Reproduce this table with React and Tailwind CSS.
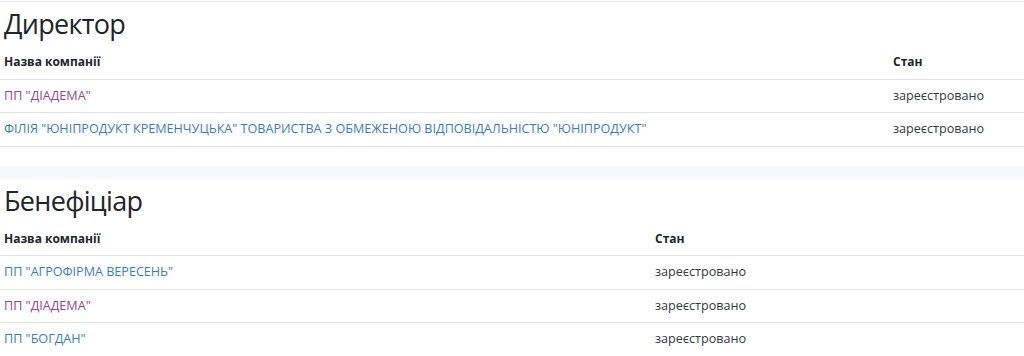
import React from "react";

const font = { fontFamily: '"Open Sans", "Noto Sans", Arial, sans-serif' };

const directors = [
  { name: 'ПП "ДІАДЕМА"', status: "зареєстровано", visited: true },
  {
    name: 'ФІЛІЯ "ЮНІПРОДУКТ КРЕМЕНЧУЦЬКА" ТОВАРИСТВА З ОБМЕЖЕНОЮ ВІДПОВІДАЛЬНІСТЮ "ЮНІПРОДУКТ"',
    status: "зареєстровано",
    visited: false,
  },
];

const beneficiaries = [
  { name: 'ПП "АГРОФІРМА ВЕРЕСЕНЬ"', status: "зареєстровано", visited: false },
  { name: 'ПП "ДІАДЕМА"', status: "зареєстровано", visited: true },
  { name: 'ПП "БОГДАН"', status: "зареєстровано", visited: false },
];

function CompanyTable({ title, rows, firstColClass }) {
  return (
    <section>
      <h2 className="px-[4px] pt-[3px] pb-[4px] text-[27px] leading-[37px] tracking-[-0.7px] font-medium text-[#212529]">
        {title}
      </h2>
      <table className="w-full border-collapse text-[#212529]">
        <thead>
          <tr className="border-b border-[#dee2e6]">
            <th className={`${firstColClass} px-[4px] py-[7px] text-[12px] leading-[18.5px] text-left font-bold`}>
              Назва компанії
            </th>
            <th className="px-[4px] py-[7px] text-[12px] leading-[18.5px] text-left font-bold">Стан</th>
          </tr>
        </thead>
        <tbody className="text-[12.6px]">
          {rows.map((r, i) => (
            <tr key={i} className="border-b border-[#dee2e6]">
              <td className="px-[4px] py-[7px] leading-[18.5px]">
                <a
                  href="#"
                  className={r.visited ? "text-[#93469a] no-underline" : "text-[#3a7bd0] no-underline"}
                >
                  {r.name}
                </a>
              </td>
              <td className="px-[4px] py-[7px] leading-[18.5px] text-[#343a40]">{r.status}</td>
            </tr>
          ))}
        </tbody>
      </table>
    </section>
  );
}

export default function App() {
  return (
    <div style={font} className="min-h-[356px] w-[1024px] bg-white">
      <div className="border-t border-[#eceef0] mt-[1px]">
        <CompanyTable title="Директор" rows={directors} firstColClass="w-[889px]" />
      </div>
      <div className="mt-[19px] h-[13px] bg-[#f6f8fa]" />
      <CompanyTable title="Бенефіціар" rows={beneficiaries} firstColClass="w-[651px]" />
    </div>
  );
}
